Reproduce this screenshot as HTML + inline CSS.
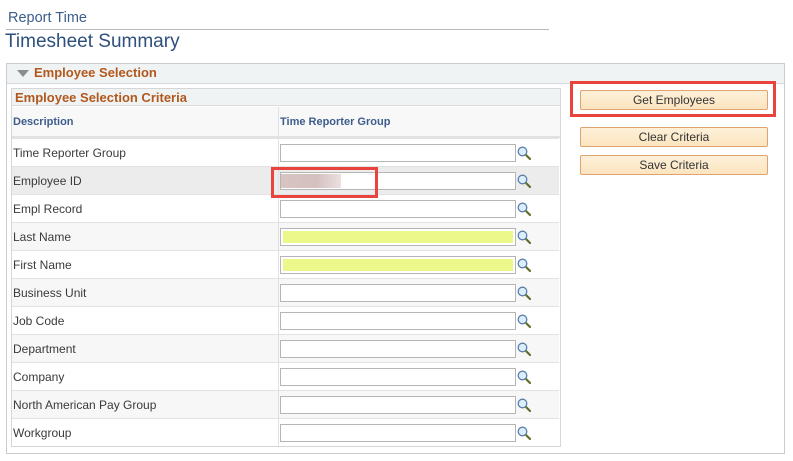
<!DOCTYPE html>
<html><head><meta charset="utf-8"><style>
*{box-sizing:border-box;margin:0;padding:0}
body{width:793px;height:461px;background:#fff;font-family:"Liberation Sans",Arial,sans-serif;position:relative;overflow:hidden}
.a{position:absolute}
.lbl{font-size:12px;color:#3a3a3a}
.inp{position:absolute;left:280px;width:236px;height:18px;border:1px solid #b5b5b5;background:#fff}
.inp.y::after{content:"";position:absolute;left:2px;top:2px;right:2px;bottom:2px;background:#ecf98a}
.btn{position:absolute;left:580px;width:188px;height:20px;border:1px solid #dfa36f;border-radius:2px;background:linear-gradient(#fdf0d9,#fce5bf);font-size:12px;color:#333;text-align:center;line-height:18px}
.row{position:absolute;left:12px;width:547px;height:28px;border-top:1px solid #e2e2e2}
.srch{position:absolute;left:517px;width:14px;height:14px}
</style></head><body>
<div class="a" style="left:8px;top:10px;font-size:14.5px;color:#3d5d8c">Report Time</div>
<div class="a" style="left:6px;top:29px;width:543px;height:1px;background:#b8b8b8"></div>
<div class="a" style="left:5px;top:31px;font-size:19px;color:#2f4f7c">Timesheet Summary</div>

<div class="a" style="left:6px;top:63px;width:779px;height:391px;border:1px solid #c9cdd0"></div>
<div class="a" style="left:7px;top:64px;width:777px;height:20px;background:#eff3f4;border-bottom:1px solid #d6dadc"></div>
<div class="a" style="left:17px;top:70px;width:0;height:0;border-left:6px solid transparent;border-right:6px solid transparent;border-top:7px solid #8c8c8c"></div>
<div class="a" style="left:34px;top:65px;font-size:13px;font-weight:bold;color:#b2581c">Employee Selection</div>

<div class="a" style="left:11px;top:88px;width:550px;height:359px;border:1px solid #d6d6d6"></div>
<div class="a" style="left:12px;top:89px;width:548px;height:17px;background:#eff3f4;border-bottom:1px solid #dcdcdc"></div>
<div class="a" style="left:15px;top:90px;font-size:13px;font-weight:bold;color:#b2581c">Employee Selection Criteria</div>
<div class="a" style="left:12px;top:107px;width:548px;height:31px;background:#f8f8f8;border-bottom:2px solid #e2e2e2"></div>
<div class="a" style="left:13px;top:116px;font-size:11px;font-weight:bold;color:#3d5d8c">Description</div>
<div class="a" style="left:280px;top:116px;font-size:11px;font-weight:bold;color:#3d5d8c">Time Reporter Group</div>

<div class="row" style="top:138px;background:#fff"></div>
<div class="row" style="top:166px;background:#ececec"></div>
<div class="row" style="top:194px;background:#fff"></div>
<div class="row" style="top:222px;background:#f7f7f7"></div>
<div class="row" style="top:250px;background:#fff"></div>
<div class="row" style="top:278px;background:#f7f7f7"></div>
<div class="row" style="top:306px;background:#fff"></div>
<div class="row" style="top:334px;background:#f7f7f7"></div>
<div class="row" style="top:362px;background:#fff"></div>
<div class="row" style="top:390px;background:#f7f7f7"></div>
<div class="row" style="top:418px;background:#fff;height:28px"></div>
<div class="a" style="left:278px;top:107px;width:1px;height:339px;background:#e2e2e2"></div>

<div class="a lbl" style="left:13px;top:146px">Time Reporter Group</div>
<div class="a lbl" style="left:13px;top:174px">Employee ID</div>
<div class="a lbl" style="left:13px;top:202px">Empl Record</div>
<div class="a lbl" style="left:13px;top:230px">Last Name</div>
<div class="a lbl" style="left:13px;top:258px">First Name</div>
<div class="a lbl" style="left:13px;top:286px">Business Unit</div>
<div class="a lbl" style="left:13px;top:314px">Job Code</div>
<div class="a lbl" style="left:13px;top:342px">Department</div>
<div class="a lbl" style="left:13px;top:370px">Company</div>
<div class="a lbl" style="left:13px;top:398px">North American Pay Group</div>
<div class="a lbl" style="left:13px;top:426px">Workgroup</div>

<div class="inp" style="top:144px"></div>
<div class="inp" style="top:172px"></div>
<div class="a" style="left:281px;top:174px;width:60px;height:14px;background:linear-gradient(90deg,#d8c3c3,#d5c0c0 60%,#ebe0e0)"></div>
<div class="inp" style="top:200px"></div>
<div class="inp y" style="top:228px"></div>
<div class="inp y" style="top:256px"></div>
<div class="inp" style="top:284px"></div>
<div class="inp" style="top:312px"></div>
<div class="inp" style="top:340px"></div>
<div class="inp" style="top:368px"></div>
<div class="inp" style="top:396px"></div>
<div class="inp" style="top:424px"></div>

<svg width="0" height="0" style="position:absolute"><defs><g id="s"><line x1="8.5" y1="8.5" x2="13" y2="13" stroke="#6b6b2a" stroke-width="2.2" stroke-linecap="round"/><circle cx="5.5" cy="5.5" r="4.3" fill="#dceefc" stroke="#5a7fa8" stroke-width="1.3"/></g></defs></svg>
<svg class="srch" style="top:146px"><use href="#s"/></svg>
<svg class="srch" style="top:174px"><use href="#s"/></svg>
<svg class="srch" style="top:202px"><use href="#s"/></svg>
<svg class="srch" style="top:230px"><use href="#s"/></svg>
<svg class="srch" style="top:258px"><use href="#s"/></svg>
<svg class="srch" style="top:286px"><use href="#s"/></svg>
<svg class="srch" style="top:314px"><use href="#s"/></svg>
<svg class="srch" style="top:342px"><use href="#s"/></svg>
<svg class="srch" style="top:370px"><use href="#s"/></svg>
<svg class="srch" style="top:398px"><use href="#s"/></svg>
<svg class="srch" style="top:426px"><use href="#s"/></svg>

<div class="a" style="left:271px;top:167px;width:107px;height:31px;border:3px solid #e8443d"></div>

<div class="a" style="left:570px;top:81px;width:206px;height:36px;border:3px solid #e8443d"></div>
<div class="btn" style="top:90px">Get Employees</div>
<div class="btn" style="top:127px">Clear Criteria</div>
<div class="btn" style="top:155px">Save Criteria</div>
</body></html>
